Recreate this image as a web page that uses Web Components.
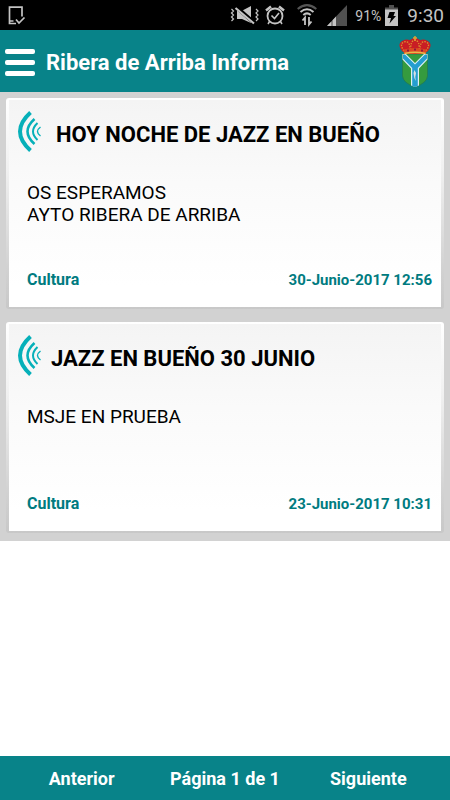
<!DOCTYPE html>
<html lang="es">
<head>
<meta charset="utf-8">
<meta name="viewport" content="width=device-width, initial-scale=1">
<title>Ribera de Arriba Informa</title>
<style>
  html, body { margin: 0; background: #fff; }
  body { font-family: Roboto, "Liberation Sans", sans-serif; color: #000; --brand: #088389; --accent: #007b80; }
</style>
</head>
<body>
<informa-app></informa-app>

<template id="t-app">
  <style>
    :host { display: flex; flex-direction: column; min-height: 100vh; }
    main { flex: 1; }
    .list { background: #d2d2d2; padding: 6px 6px 8px; display: flex; flex-direction: column; gap: 13px; }
  </style>
  <status-bar></status-bar>
  <app-header>Ribera de Arriba Informa</app-header>
  <main>
    <div class="list">
      <news-card style="--title-gap: 14px">
        <span slot="title">HOY NOCHE DE JAZZ EN BUEÑO</span>
        OS ESPERAMOS<br>AYTO RIBERA DE ARRIBA
        <span slot="category">Cultura</span>
        <time slot="date" datetime="2017-06-30T12:56">30-Junio-2017 12:56</time>
      </news-card>
      <news-card style="--title-gap: 9px">
        <span slot="title">JAZZ EN BUEÑO 30 JUNIO</span>
        MSJE EN PRUEBA
        <span slot="category">Cultura</span>
        <time slot="date" datetime="2017-06-23T10:31">23-Junio-2017 10:31</time>
      </news-card>
    </div>
  </main>
  <page-nav>Página 1 de 1</page-nav>
</template>

<template id="t-status">
  <style>
    :host { display: flex; align-items: center; height: 30px; background: #000; color: #c4c4c4; padding: 0 6px 0 8px; }
    svg { display: block; flex: none; }
    .right { margin-left: auto; display: flex; align-items: center; }
    .vib { margin-right: 5px; }
    .alarm { margin-right: 12px; }
    .wifi { margin-right: 10px; }
    .sig { margin-right: 8px; }
    .pct { font-size: 14px; line-height: 30px; padding-top: 2px; margin-right: 4px; }
    .bat { margin-right: 9px; }
    .time { font-size: 19px; line-height: 30px; padding-top: 2px; }
  </style>
  <svg width="18" height="20" viewBox="0 0 18 20" fill="none" stroke="#c4c4c4" stroke-width="1.700">
    <path d="M14 11.500V2.200H1.500V18.500H8"/><path d="M2 16H5.500M8 14.500L11 18L16.500 12.500"/>
  </svg>
  <div class="right">
    <svg class="vib" width="30" height="22" viewBox="0 0 30 22">
      <path d="M7 7h4.500L21 2v17L12 15H7z" fill="#c4c4c4"/>
      <path d="M5 2L25 19.500" stroke="#000" stroke-width="4"/>
      <path d="M5.500 4L24 19.500" stroke="#c4c4c4" stroke-width="2.200"/>
      <path d="M1.500 5l2 2-2 2 2 2-2 2 2 2-2 2M26 5l2 2-2 2 2 2-2 2 2 2-2 2" fill="none" stroke="#c4c4c4" stroke-width="1.200"/>
    </svg>
    <svg class="alarm" width="20" height="22" viewBox="0 0 20 22" fill="none" stroke="#c4c4c4">
      <circle cx="10" cy="12" r="7.500" stroke-width="1.800"/>
      <path d="M1 6.500L6 2.500M19 6.500L14 2.500" stroke-width="2.500"/>
      <path d="M6.500 11.500L9.500 14.500L14 9" stroke-width="1.600"/>
      <path d="M4.500 17.500L3 20M15.500 17.500L17 20" stroke-width="1.500"/>
    </svg>
    <svg class="wifi" width="20" height="24" viewBox="0 0 20 24" fill="none" stroke="#c4c4c4" stroke-width="2">
      <path d="M.7 6Q10-1.800 19.300 6" stroke="#555"/>
      <path d="M3.500 9Q10 3.500 16.500 9M6.300 12Q10 8.800 13.700 12"/>
      <path d="M8 22v-7M5.500 17.500L8 14.500V22M12 14v7M14.500 18.500L12 21.500V14" stroke-width="1.800"/>
    </svg>
    <svg class="sig" width="20" height="22" viewBox="0 0 20 22">
      <path d="M0 22L20 1V22z" fill="#505050"/>
      <path d="M0 22L4.500 17.200V22zM5.500 22V16.200L9 12.500V22z" fill="#c4c4c4"/>
    </svg>
    <span class="pct">91%</span>
    <svg class="bat" width="13" height="21" viewBox="0 0 13 21">
      <path d="M4 0h5v2.500h4V6H0V2.500h4z" fill="#505050"/>
      <path d="M0 4.500h13V21H0z" fill="#c4c4c4"/>
      <path d="M4.500 7h5.500l-1.500 4H11l-6.500 7.500 1.500-5.500H2.500z" fill="#000"/>
    </svg>
    <span class="time">9:30</span>
  </div>
</template>

<template id="t-header">
  <style>
    :host { display: flex; align-items: center; height: 62px; background: var(--brand); color: #fff; padding: 0 19px 0 5px; }
    button { all: unset; display: grid; gap: 6px; width: 30px; margin-right: 11px; padding-top: 2px; cursor: pointer; }
    i { height: 5px; border-radius: 2px; background: #fff; }
    h1 { flex: 1; margin: 0; padding-top: 3px; font-size: 22px; line-height: 28px; font-weight: 700; }
    svg { display: block; margin-top: 2px; }
  </style>
  <button type="button" aria-label="Menú"><i></i><i></i><i></i></button>
  <h1><slot></slot></h1>
  <svg width="32" height="52" viewBox="0 0 32 52" role="img" aria-label="Escudo de Ribera de Arriba">
    <path d="M3.500 18h25v22Q28 47 16 51Q4 47 3.500 40z" fill="#359b3e" stroke="#227f54"/>
    <path d="M3.500 18H7L16 27L25 18H28.500V23.500L20 32.500V49.500L16 51L12 49.500V32.500L3.500 23.500z" fill="#dceff7"/>
    <path d="M4 18.500H6L16 28.500L26 18.500H28V22.500L18.800 32V50L16 51L13.200 50V32L4 22.500z" fill="#249ed0"/>
    <path d="M15.500 34l1.500 3-.7 4 .5 4-1.500-3-.8-5z" fill="#d5e0e4"/>
    <path d="M4 16Q-1 11 1 7Q5 2 11 4Q16 0 21 4Q27 2 31 7Q33 11 28 16z" fill="#c91d24"/>
    <path d="M5 15Q0 8 5 6Q11 4 11 14M12 14Q11 5 16 4Q21 5 20 14M27 15Q32 8 27 6Q21 4 21 14" fill="none" stroke="#d9912d" stroke-width="1.300" stroke-dasharray="1.500 1.200"/>
    <path d="M16 0v5M14 2h4" stroke="#d9a336" stroke-width="1.500"/>
    <path d="M4.500 13.500Q16 10.500 27.500 13.500L27 18H5z" fill="#dc4a24"/>
    <path d="M5.500 17.500Q16 15 26.500 17.500" fill="none" stroke="#e7b94b" stroke-width="1.300"/>
    <path d="M8 14.500h2M15 13.500h2M22 14.500h2" stroke="#8e173d" stroke-width="2"/>
  </svg>
</template>

<template id="t-card">
  <style>
    :host {
      display: flex; flex-direction: column; box-sizing: border-box; min-height: 211px;
      border: solid transparent; border-width: 2px 3px; border-radius: 3px; padding: 8px 9px 17px 9px;
      background:
        linear-gradient(#f4f4f4, #fafafa 40%, #fff 90%) padding-box,
        linear-gradient(#fff, #f0f0f0 35%, #d2d2d2 80%, #c8c8c8) border-box;
    }
    header { display: flex; align-items: center; gap: var(--title-gap); height: 48px; }
    svg { display: block; flex: none; }
    h2 { margin: 0; padding-top: 5px; font-size: 22px; line-height: 28px; font-weight: 700; }
    p { flex: 1; margin: 26px 0 0 9px; font-size: 19px; line-height: 22px; }
    footer { display: flex; align-items: center; justify-content: space-between; margin-left: 9px; line-height: 20px; font-weight: 700; color: var(--accent); }
    .cat { font-size: 16px; }
    .date { font-size: 15px; }
  </style>
  <header>
    <svg width="24" height="42" viewBox="0 0 24 42" fill="none" stroke="#06b0b9" aria-hidden="true">
      <path d="M12.500 1.500Q-8.500 20.500 12.500 39.500" stroke-width="4"/>
      <path d="M16.500 8Q2.500 20.500 16.500 33" stroke-width="2.600"/>
      <path d="M19.500 12Q10.500 20.500 19.500 29" stroke-width="2"/>
      <path d="M22.500 16Q16.500 20.500 22.500 25" stroke-width="1.400"/>
    </svg>
    <h2><slot name="title"></slot></h2>
  </header>
  <p><slot></slot></p>
  <footer><span class="cat"><slot name="category"></slot></span><span class="date"><slot name="date"></slot></span></footer>
</template>

<template id="t-nav">
  <style>
    :host { display: grid; grid-template-columns: 1fr 1fr 1fr; align-items: center; justify-items: center; height: 42px; padding: 2px 10px 0; background: var(--brand); color: #fff; font-size: 18px; line-height: 24px; font-weight: 700; }
    button { all: unset; cursor: pointer; }
  </style>
  <button type="button">Anterior</button>
  <span><slot></slot></span>
  <button type="button">Siguiente</button>
</template>

<script>
  const define = (name, templateId) => customElements.define(name, class extends HTMLElement {
    constructor() {
      super();
      this.attachShadow({ mode: "open" })
        .append(document.getElementById(templateId).content.cloneNode(true));
    }
  });
  define("status-bar", "t-status");
  define("app-header", "t-header");
  define("news-card", "t-card");
  define("page-nav", "t-nav");
  define("informa-app", "t-app");
</script>
</body>
</html>
